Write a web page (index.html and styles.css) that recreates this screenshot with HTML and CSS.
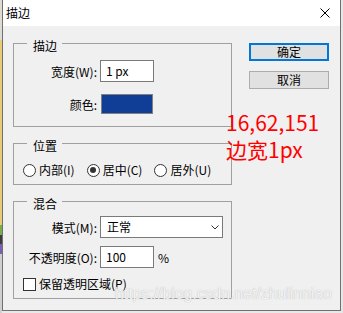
FILE: index.html
```html
<!DOCTYPE html>
<html lang="zh-CN">
<head>
<meta charset="utf-8">
<title>描边</title>
<link rel="stylesheet" href="styles.css">
</head>
<body>
<div class="screen">
  <div class="bg-left"></div>
  <div class="dialog">
    <div class="titlebar">
      <span class="title">描边</span>
      <svg class="close" width="10" height="10" viewBox="0 0 10 10"><path d="M0.5 0.5 L9.5 9.5 M9.5 0.5 L0.5 9.5" stroke="#000" stroke-width="1" fill="none"/></svg>
    </div>
    <div class="body">
      <div class="groups">
        <fieldset class="group g-stroke">
          <legend>描边</legend>
          <div class="grid">
            <span class="lbl">宽度(W):</span><div class="input">1 px</div>
            <span class="lbl">颜色:</span><div class="swatch-cell"><div class="swatch"></div></div>
          </div>
        </fieldset>
        <fieldset class="group g-pos">
          <legend>位置</legend>
          <div class="radios">
            <span class="radio"><span class="circle"></span>内部(I)</span>
            <span class="radio"><span class="circle checked"></span>居中(C)</span>
            <span class="radio"><span class="circle"></span>居外(U)</span>
          </div>
        </fieldset>
        <fieldset class="group g-blend">
          <legend>混合</legend>
          <div class="grid">
            <span class="lbl">模式(M):</span>
            <div class="select"><span>正常</span><svg class="chev" width="8" height="5" viewBox="0 0 8 5"><path d="M0.5 0.5 L4 4 L7.5 0.5" stroke="#333" stroke-width="1" fill="none"/></svg></div>
            <span class="lbl">不透明度(O):</span>
            <div class="opacity"><div class="input">100</div><span class="pct">%</span></div>
            <span class="check-row"><span class="box"></span>保留透明区域(P)</span>
          </div>
        </fieldset>
      </div>
      <div class="buttons">
        <div class="btn primary">确定</div>
        <div class="btn">取消</div>
      </div>
    </div>
  </div>
  <div class="bg-right"></div>
  <div class="note">16,62,151<br>边宽1px</div>
  <div class="watermark">https://blog.csdn.net/zhulinniao</div>
</div>
</body>
</html>
```
FILE: styles.css
```css
html, body {
  margin: 0;
  padding: 0;
}
body {
  font-family: "Noto Sans CJK SC", "Liberation Sans", sans-serif;
  font-size: 12px;
  color: #000;
}
.screen {
  position: relative;
  display: flex;
  width: 343px;
  height: 313px;
  overflow: hidden;
  background: #e9e9e9;
}
.bg-left {
  width: 2px;
  flex: none;
  background: linear-gradient(to bottom, #dedbd2 0 40px, #e8cb74 40px 225px, #79ad4c 225px 235px, #3c3c3c 235px 244px, #7b60b2 244px 254px, #cfcfcf 254px);
}
.bg-right {
  flex: 1;
  background: #e6e6e6;
}
.dialog {
  width: 339px;
  height: 311px;
  flex: none;
  box-sizing: border-box;
  border: 1px solid #707070;
  border-top: none;
  background: #f0f0f0;
  display: flex;
  flex-direction: column;
}
.titlebar {
  height: 26px;
  background: #fff;
  display: flex;
  align-items: center;
  justify-content: space-between;
  padding: 0 10px 0 3px;
}
.title {
  line-height: 26px;
}
.close {
  display: block;
}
.body {
  flex: 1;
  display: flex;
  padding: 8px 0 0 10px;
}
.groups {
  width: 219px;
  display: flex;
  flex-direction: column;
  gap: 7px;
}
.group {
  margin: 0;
  min-width: 0;
  box-sizing: border-box;
  width: 219px;
  border: 1px solid #a0a0a0;
}
.group legend {
  margin-left: 13px;
  padding: 6px 5px 0 6px;
  line-height: 12px;
}
.g-stroke { padding: 8px 0 11px 0; }
.g-pos { padding: 10px 0 6px 0; }
.g-blend { padding: 6px 0 6px 0; }
.grid {
  display: grid;
  grid-template-columns: 83px auto;
  column-gap: 3px;
  align-items: center;
}
.g-stroke .grid { row-gap: 11px; }
.g-blend .grid { row-gap: 8px; }
.lbl {
  text-align: right;
  white-space: nowrap;
}
.input {
  width: 54px;
  height: 22px;
  box-sizing: border-box;
  border: 1px solid #7a7a7a;
  background: #fff;
  padding-left: 5px;
  line-height: 20px;
  color: #000;
}
.swatch-cell {
  height: 22px;
  display: flex;
  align-items: center;
}
.swatch {
  margin-left: 1px;
  width: 52px;
  height: 20px;
  box-sizing: border-box;
  border: 1px solid #808080;
  background: rgb(16, 62, 151);
}
.radios {
  display: flex;
  align-items: center;
  height: 16px;
  padding-left: 9px;
  gap: 12px;
}
.radio, .check-row {
  display: inline-flex;
  align-items: center;
  gap: 3px;
  line-height: 16px;
  white-space: nowrap;
}
.circle {
  width: 13px;
  height: 13px;
  box-sizing: border-box;
  border: 1px solid #333;
  border-radius: 50%;
  background: #fff;
  display: flex;
  align-items: center;
  justify-content: center;
}
.circle.checked::after {
  content: "";
  width: 6px;
  height: 6px;
  border-radius: 50%;
  background: #333;
}
.select {
  width: 123px;
  height: 22px;
  box-sizing: border-box;
  border: 1px solid #7a7a7a;
  background: #fff;
  display: flex;
  align-items: center;
  justify-content: space-between;
  padding: 0 3px 0 6px;
  line-height: 20px;
}
.chev {
  display: block;
}
.opacity {
  display: flex;
  align-items: center;
  gap: 4px;
}
.check-row {
  grid-column: 1 / span 2;
  padding-left: 9px;
  height: 16px;
}
.box {
  width: 13px;
  height: 13px;
  box-sizing: border-box;
  border: 1px solid #333;
  background: #fff;
}
.buttons {
  margin: 9px 11px 0 auto;
  display: flex;
  flex-direction: column;
  gap: 10px;
}
.btn {
  width: 80px;
  height: 18px;
  box-sizing: border-box;
  border: 1px solid #adadad;
  background: #e1e1e1;
  text-align: center;
  line-height: 16px;
}
.btn.primary {
  border: 2px solid #0078d7;
  line-height: 14px;
}
.note {
  position: absolute;
  left: 226px;
  top: 109px;
  font-size: 21px;
  line-height: 27px;
  color: #ff0000;
  white-space: nowrap;
}
.watermark {
  position: absolute;
  left: 115px;
  top: 285px;
  font-family: "Liberation Sans", sans-serif;
  font-size: 15.8px;
  line-height: 18px;
  color: rgba(252, 252, 252, 0.9);
  text-shadow: 0 0 1px rgba(120, 120, 120, 0.6);
  white-space: nowrap;
}
```
